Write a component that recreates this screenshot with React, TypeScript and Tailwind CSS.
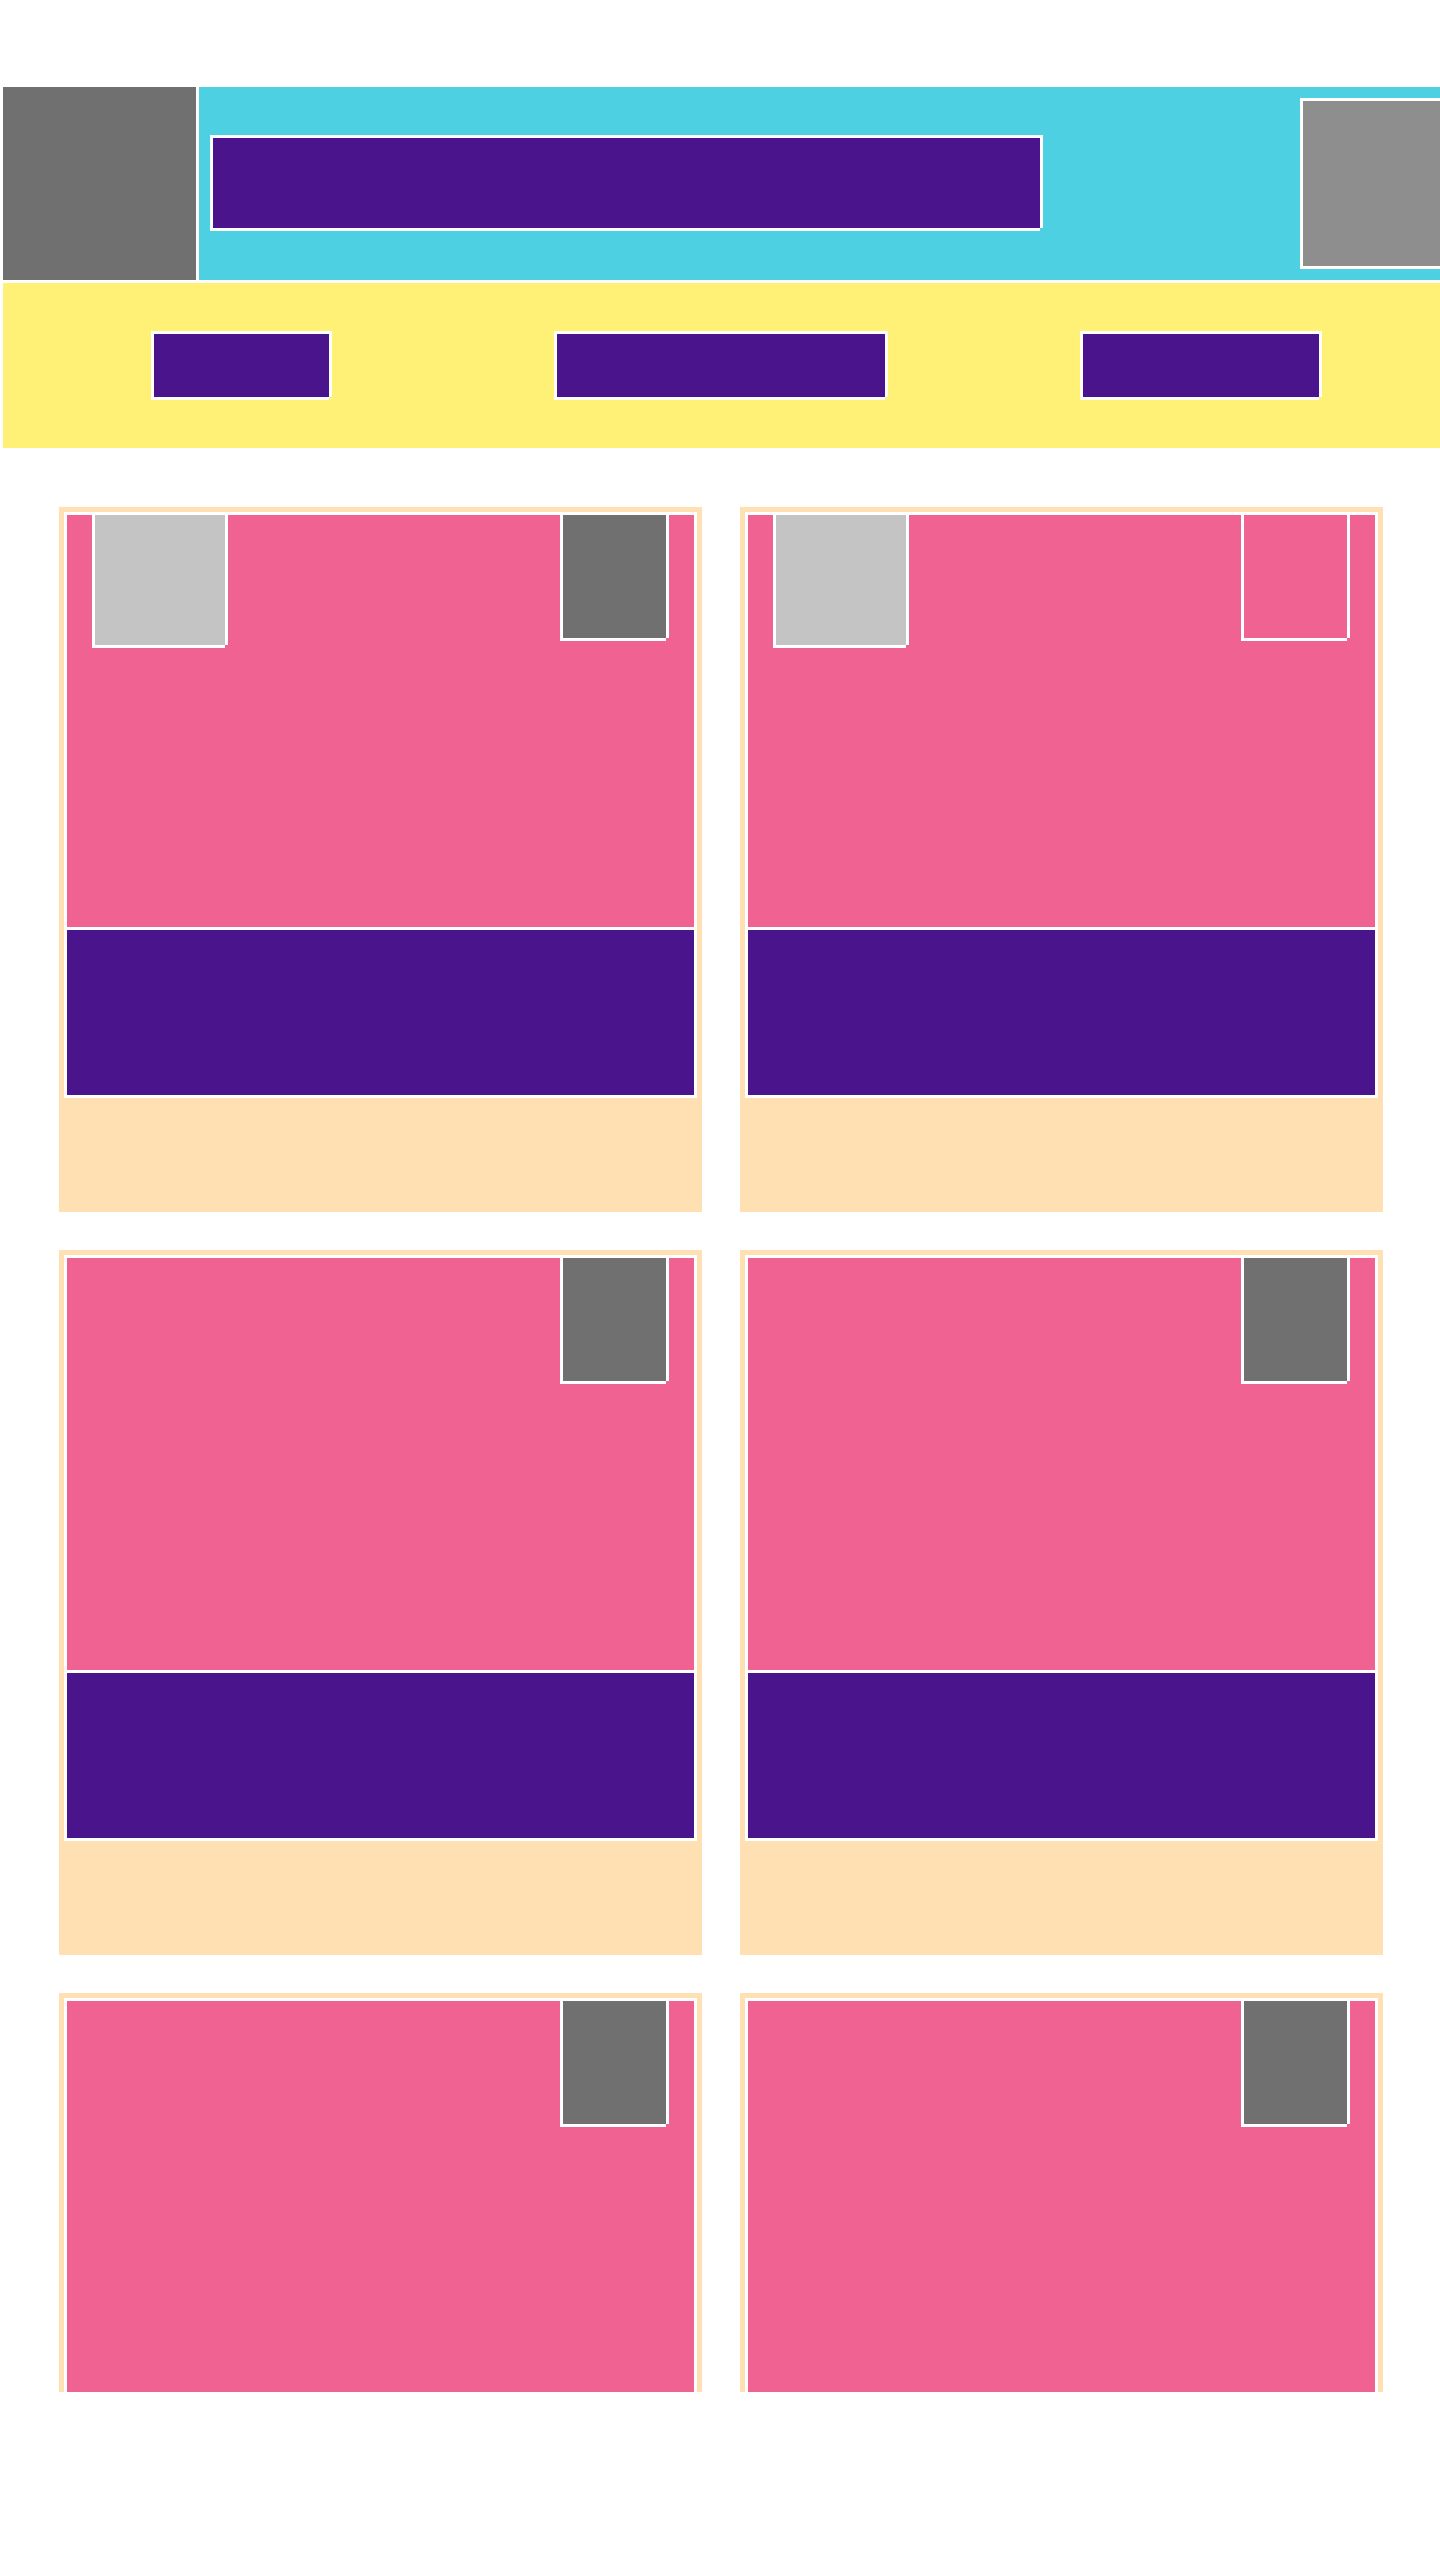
import React from "react";

const frame =
  "border-l-[3px] border-t-[3px] border-white shadow-[3px_0_0_#fff,0_3px_0_#fff]";

function Card({ thumb, badge }: { thumb?: boolean; badge: "dark" | "outline" }) {
  return (
    <div className="bg-[#FFE0B2] p-[5px] h-[705px] flex flex-col">
      <div className="border-[3px] border-white flex flex-col">
        <div className="relative h-[412px] bg-[#F06292]">
          {thumb && (
            <div
              className={`absolute left-[25px] top-[-3px] w-[133px] h-[133px] bg-[#C4C4C4] ${frame}`}
            />
          )}
          <div
            className={`absolute right-[28px] top-[-3px] w-[106px] h-[126px] ${
              badge === "dark" ? "bg-[#707070]" : "bg-transparent"
            } ${frame}`}
          />
        </div>
        <div className="h-[168px] border-t-[3px] border-white bg-[#4A148C]" />
      </div>
      <div className="h-[109px]" />
    </div>
  );
}

export default function App() {
  return (
    <div className="w-[1440px] h-[2560px] bg-white overflow-hidden font-['Liberation_Sans',sans-serif]">
      <header className="pt-[87px]">
        <div className="flex h-[193px]">
          <div className="ml-[3px] w-[193px] shrink-0 bg-[#707070]" />
          <div className="ml-[3px] flex-1 bg-[#4DD0E1] flex items-start pl-[11px] overflow-visible">
            <div className={`mt-[48px] shrink-0 w-[830px] h-[93px] bg-[#4A148C] ${frame}`} />
            <div className={`ml-[260px] mt-[11px] shrink-0 w-[168px] h-[168px] bg-[#8E8E8E] ${frame}`} />
          </div>
        </div>
        <nav className="mt-[3px] h-[165px] bg-[#FFF176] shadow-[inset_3px_0_0_#fff] grid grid-cols-[480px_479px_481px] justify-items-center items-start pt-[48px]">
          <div className={`w-[178px] h-[66px] bg-[#4A148C] ${frame}`} />
          <div className={`w-[331px] h-[66px] bg-[#4A148C] ${frame}`} />
          <div className={`w-[239px] h-[66px] bg-[#4A148C] ${frame}`} />
        </nav>
      </header>
      <main className="h-[1944px] overflow-hidden pt-[59px] pl-[59px]">
        <div className="w-[1324px] grid grid-cols-2 gap-[38px]">
          <Card thumb badge="dark" />
          <Card thumb badge="outline" />
          <Card badge="dark" />
          <Card badge="dark" />
          <Card badge="dark" />
          <Card badge="dark" />
        </div>
      </main>
    </div>
  );
}
